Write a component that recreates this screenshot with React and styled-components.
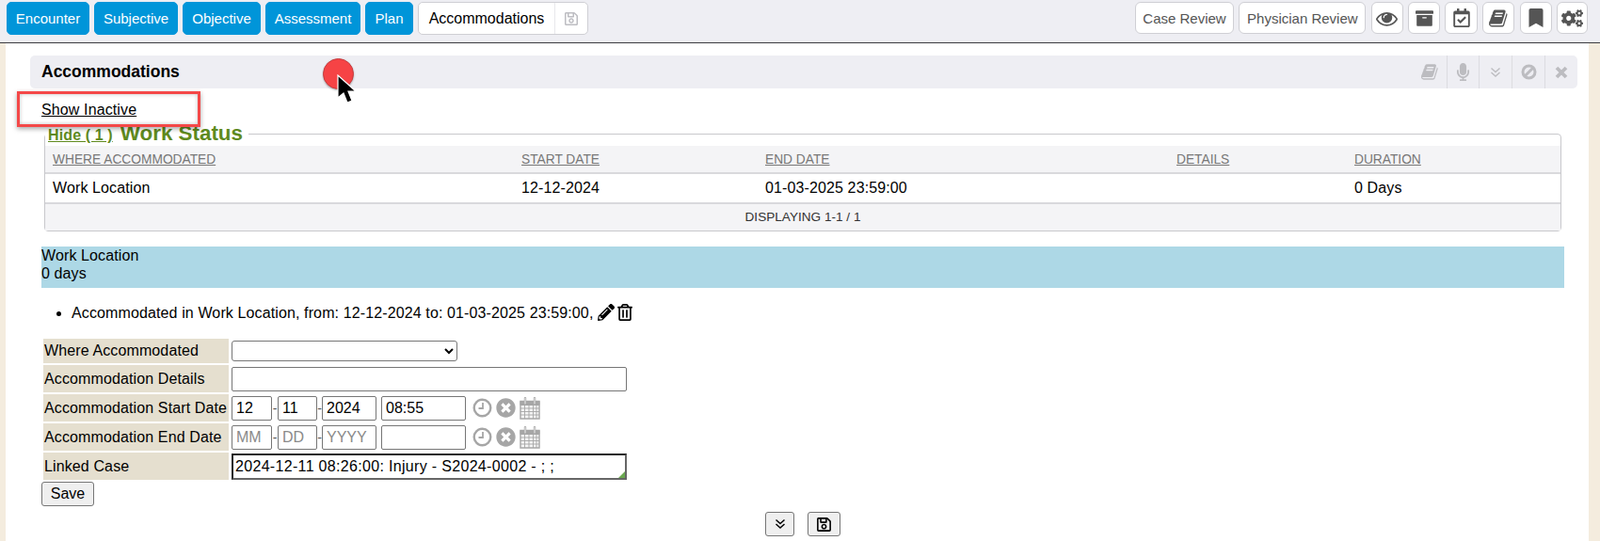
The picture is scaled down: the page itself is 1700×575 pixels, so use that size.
import React from 'react';
import styled, { createGlobalStyle } from 'styled-components';
import {
  FaArchive, FaRegCalendarCheck, FaBookmark, FaCogs, FaMicrophone,
  FaPencilAlt, FaRegTrashAlt, FaTimesCircle, FaRegSave,
} from 'react-icons/fa';

const Global = createGlobalStyle`
  html, body { margin: 0; padding: 0; height: 575px; overflow: hidden; background: #f4ecde; }
  body { font-family: "Liberation Sans", Arial, sans-serif; font-size: 16px; color: #000; }
  * { box-sizing: border-box; }
`;

const Page = styled.div`
  position: relative;
  width: 1700px;
  height: 575px;
  overflow: hidden;
`;

const TopBar = styled.header`
  display: flex;
  justify-content: space-between;
  height: 46px;
  padding: 2px 13px 0 7px;
  background: #eeeef3;
  border-bottom: 1px solid #3c3c40;
`;

const ButtonRow = styled.nav`
  display: flex;
  gap: ${p => p.$gap || 5}px;
`;

const NavButton = styled.button`
  height: 35px;
  padding: 0;
  width: ${p => p.$w}px;
  font: 15px "Liberation Sans", Arial, sans-serif;
  color: #fff;
  background: #0095d9;
  border: 1px solid #0095d9;
  border-radius: 5px;
`;

const ActiveGroup = styled.div`
  display: flex;
  width: 181px;
  height: 35px;
  background: #fff;
  border: 1px solid #cfcfd4;
  border-radius: 5px;
`;

const ActiveLabel = styled.span`
  flex: 1;
  font-size: 16px;
  line-height: 33px;
  text-align: center;
  border-right: 1px solid #e8e8ec;
`;

const ActiveIcon = styled.span`
  width: 34px;
  display: flex;
  align-items: center;
  justify-content: center;
  color: #bdbdc2;
  font-size: 16px;
`;

const ToolButton = styled.button`
  height: 34px;
  width: ${p => p.$w}px;
  padding: 0;
  display: flex;
  align-items: center;
  justify-content: center;
  font: 15px "Liberation Sans", Arial, sans-serif;
  color: #555;
  background: #fff;
  border: 1px solid #cfcfd4;
  border-radius: 6px;
`;

const Content = styled.main`
  margin: 0 12px 0 6px;
  height: 529px;
  background: #fff;
  padding-top: 13px;
  letter-spacing: 0.12px;
`;

const PanelHeader = styled.div`
  display: flex;
  align-items: stretch;
  height: 35px;
  margin: 0 12px 0 26px;
  padding-left: 12px;
  background: #eeeef3;
  border-radius: 5px;
  letter-spacing: 0;
`;

const PanelTitle = styled.h2`
  flex: 1;
  margin: 0;
  font-size: 17.5px;
  line-height: 35px;
  font-weight: bold;
`;

const PanelIcon = styled.span`
  width: ${p => p.$w}px;
  display: flex;
  align-items: center;
  justify-content: center;
  color: #bcbcc0;
  font-size: ${p => p.$size || 17}px;
  border-left: ${p => (p.$plain ? 'none' : '1px solid #dcdce0')};
`;

const InactiveLine = styled.div`
  margin: 13px 0 0 38px;
  height: 20px;
  line-height: 20px;
`;

const PlainLink = styled.a`
  color: #000;
  text-decoration: underline;
`;

const WorkSet = styled.fieldset`
  margin: 3px 29px 0 41px;
  padding: 0;
  min-width: 0;
  border: 1px solid #c8c8cc;
  border-radius: 4px;
`;

const WorkLegend = styled.legend`
  display: flex;
  align-items: baseline;
  height: 25px;
  padding: 0 6px 0 3px;
  margin-left: 0;
  color: #5f8a1e;
  font-weight: bold;
  line-height: 23px;
  white-space: nowrap;
`;

const HideLink = styled.a`
  font-size: 16px;
  text-decoration: underline;
  margin-right: 8px;
`;

const WorkTitle = styled.span`
  font-size: 22.4px;
  letter-spacing: 0;
`;

const GridRow = styled.div`
  display: grid;
  grid-template-columns: 498px 259px 437px 189px 1fr;
  align-items: center;
  padding-left: 8px;
  height: ${p => p.$h}px;
  background: ${p => p.$bg || '#fff'};
  border-bottom: 2px solid #d9d9dc;
`;

const HeadCell = styled.a`
  font-size: 13.75px;
  letter-spacing: 0;
  color: #777;
  text-decoration: underline;
`;

const GridFoot = styled.div`
  height: 28px;
  line-height: 28px;
  font-size: 13.6px;
  letter-spacing: 0;
  color: #333;
  text-align: center;
  background: #f4f4f6;
`;

const Band = styled.div`
  margin: 16px 26px 0 38px;
  height: 44px;
  padding-top: 1px;
  background: #add8e6;
  line-height: 18.5px;
`;

const EntryList = styled.ul`
  margin: 17px 0 0 38px;
  padding: 0 0 0 32px;
  line-height: 20px;
`;

const EntryIcons = styled.span`
  display: inline-flex;
  align-items: center;
  gap: 2px;
  margin-left: 5px;
  vertical-align: -3px;
  font-size: 18px;
`;

const FormGrid = styled.div`
  display: grid;
  grid-template-columns: 197px 1fr;
  grid-template-rows: 26px repeat(4, 29px);
  row-gap: 2px;
  column-gap: 3px;
  margin: 17px 0 0 40px;
`;

const Label = styled.div`
  display: flex;
  align-items: center;
  padding-left: 1px;
  background: #e5dfcf;
  white-space: nowrap;
  font-size: 16px;
`;

const Field = styled.div`
  display: flex;
  align-items: center;
`;

const Select = styled.select`
  width: 240px;
  height: 22px;
  background: #fff;
  border: 1px solid #767676;
  border-radius: 3px;
  font: 16px "Liberation Sans", Arial, sans-serif;
`;

const TextInput = styled.input`
  width: ${p => p.$w}px;
  height: 26px;
  padding: 1px 4px;
  font: 16px "Liberation Sans", Arial, sans-serif;
  color: #000;
  background: #fff;
  border: 1px solid #767676;
  border-radius: 2px;
  &::placeholder { color: #8a8a8a; }
`;

const Dash = styled.span`
  width: ${p => p.$w}px;
  text-align: center;
  color: #555;
  font-size: 14px;
  letter-spacing: 0;
`;

const DateIcons = styled.span`
  display: inline-flex;
  align-items: center;
  gap: 4px;
  margin-left: 7px;
  color: #a6a6a6;
`;

const CaseBox = styled.div`
  position: relative;
  width: 420px;
  height: 28px;
  padding: 0 2px;
  line-height: 23px;
  letter-spacing: 0.32px;
  border-style: solid;
  border-width: 2px;
  border-color: #222 #666 #666 #222;
  background: #fff;
  overflow: hidden;
`;

const CaseCorner = styled.span`
  position: absolute;
  right: 0;
  bottom: 0;
  width: 0;
  height: 0;
  border-style: solid;
  border-width: 0 0 7px 7px;
  border-color: transparent transparent #6aa84f transparent;
`;

const SaveButton = styled.button`
  display: block;
  margin: 2px 0 0 38px;
  width: 56px;
  height: 26px;
  padding: 0;
  font: 16px "Liberation Sans", Arial, sans-serif;
  background: #efefef;
  border: 1px solid #767676;
  border-radius: 3px;
`;

const BottomBar = styled.div`
  display: flex;
  justify-content: center;
  gap: 14px;
  margin: 6px 0 0 0;
  padding-left: 12px;
`;

const BottomButton = styled.button`
  width: ${p => p.$w}px;
  height: 26px;
  padding: 0;
  display: flex;
  align-items: center;
  justify-content: center;
  font-size: ${p => p.$size}px;
  color: #000;
  background: #efefef;
  border: 1px solid #767676;
  border-radius: 3px;
`;

const RedBox = styled.div`
  position: absolute;
  left: 18px;
  top: 97px;
  width: 195px;
  height: 38px;
  border: 3px solid #f44848;
  box-shadow: 0 2px 5px rgba(0, 0, 0, 0.35), inset 0 0 4px rgba(0, 0, 0, 0.25);
`;

const ClickDot = styled.div`
  position: absolute;
  left: 343px;
  top: 62px;
  width: 33px;
  height: 33px;
  border-radius: 50%;
  background: #f64345;
  border: 1px solid #c83a3c;
  box-shadow: 0 1px 2px rgba(0, 0, 0, 0.3);
`;

const CursorArrow = styled.svg`
  position: absolute;
  left: 357px;
  top: 79px;
`;

const BookIcon = ({ size = 18 }) => (
  <svg width={size} height={size} viewBox="0 0 1792 1792" fill="currentColor">
    <path d="M1639 478q40 57 18 129l-275 906q-19 64-76.5 107.5t-122.5 43.5h-923q-77 0-148.5-53.5t-99.5-131.5q-24-67-2-127 0-4 3-27t4-37q1-8-3-21.5t-3-19.5q2-11 8-21t16.5-23.5 16.5-23.5q23-38 45-91.5t30-91.5q3-10 .5-30t-.5-28q3-11 17-28t17-23q21-36 42-92t25-90q1-9-2.5-32t.5-28q4-13 22-30.5t22-22.5q19-26 42.5-84.5t27.5-96.5q1-8-3-25.5t-2-26.5q2-8 9-18t18-23 17-21q8-12 16.5-30.5t15-35 16-36 19.5-32 26.5-23.5 36-11.5 47.5 5.5l-1 3q38-9 51-9h761q74 0 114 56t18 130l-274 906q-36 119-71.5 153.5t-128.5 34.5h-869q-27 0-38 15-11 16-1 43 24 70 144 70h923q29 0 56-15.5t35-41.5l300-987q7-22 5-57 38 15 59 43zm-1064 2q-4 13 2 22.5t20 9.5h608q13 0 25.5-9.5t16.5-22.5l21-64q4-13-2-22.5t-20-9.5h-608q-13 0-25.5 9.5t-16.5 22.5zm-83 256q-4 13 2 22.5t20 9.5h608q13 0 25.5-9.5t16.5-22.5l21-64q4-13-2-22.5t-20-9.5h-608q-13 0-25.5 9.5t-16.5 22.5z" />
  </svg>
);

const EyeIcon = ({ size = 24 }) => (
  <svg width={size} height={size} viewBox="0 0 1792 1792" fill="currentColor">
    <path d="M1664 960q-152-236-381-353 61 104 61 225 0 185-131.500 316.500t-316.500 131.500-316.500-131.500-131.500-316.500q0-121 61-225-229 117-381 353 133 205 333.500 326.500t434.500 121.500 434.500-121.500 333.500-326.500zm-720-384q0-20-14-34t-34-14q-125 0-214.500 89.500t-89.500 214.500q0 20 14 34t34 14 34-14 14-34q0-86 61-147t147-61q20 0 34-14t14-34zm848 384q0 34-20 69-140 230-376.500 368.500t-499.500 138.500-499.500-139-376.500-368q-20-35-20-69t20-69q140-229 376.500-368t499.500-139 499.500 139 376.500 368q20 35 20 69z" />
  </svg>
);

const DoubleChevron = ({ size = 14, weight = 1.6 }) => (
  <svg width={size} height={size} viewBox="0 0 14 14" fill="none" stroke="currentColor" strokeWidth={weight}>
    <path d="M2.500 2.500 7 6.500l4.500-4M2.500 7 7 11l4.500-4" />
  </svg>
);

const BanIcon = () => (
  <svg width="17" height="17" viewBox="0 0 17 17" fill="none" stroke="currentColor" strokeWidth="3">
    <circle cx="8.500" cy="8.500" r="6.500" />
    <path d="M4 13 13 4" />
  </svg>
);

const CrossIcon = () => (
  <svg width="14" height="14" viewBox="0 0 14 14" fill="none" stroke="currentColor" strokeWidth="3.800">
    <path d="M2 2l10 10M12 2 2 12" />
  </svg>
);

const ClockIcon = () => (
  <svg width="21" height="21" viewBox="0 0 21 21" fill="none" stroke="currentColor">
    <circle cx="10.500" cy="10.500" r="8.800" strokeWidth="2.400" />
    <path d="M11 5v6H6.500" strokeWidth="1.800" />
  </svg>
);

const CalendarIcon = () => (
  <svg width="22" height="24" viewBox="0 0 22 24" fill="none" stroke="currentColor">
    <path d="M1 4.500h20v18.500H1z" strokeWidth="1.400" fill="#f4f4f4" />
    <path d="M1 4.500h20v4H1z" fill="currentColor" strokeWidth="1" />
    <path d="M1 12h20M1 15.500h20M1 19h20M5.500 9v14M10 9v14M14.500 9v14M18 9v14" strokeWidth="0.900" />
    <path d="M6 1v6M16 1v6" strokeWidth="2.400" strokeLinecap="round" />
    <path d="M6 1v6M16 1v6" strokeWidth="0.800" stroke="#fff" strokeLinecap="round" />
  </svg>
);

const tabs = [['Encounter', 88], ['Subjective', 89], ['Objective', 83], ['Assessment', 101], ['Plan', 51]];

export default function App() {
  return (
    <Page>
      <Global />
      <TopBar>
        <ButtonRow>
          {tabs.map(([t, w]) => <NavButton key={t} $w={w}>{t}</NavButton>)}
          <ActiveGroup>
            <ActiveLabel>Accommodations</ActiveLabel>
            <ActiveIcon><FaRegSave /></ActiveIcon>
          </ActiveGroup>
        </ButtonRow>
        <ButtonRow $gap={5.35}>
          <ToolButton $w={105}>Case Review</ToolButton>
          <ToolButton $w={135}>Physician Review</ToolButton>
          <ToolButton $w={34}><EyeIcon size={23} /></ToolButton>
          <ToolButton $w={34}><FaArchive size={19} /></ToolButton>
          <ToolButton $w={34.600}><FaRegCalendarCheck size={20} /></ToolButton>
          <ToolButton $w={34}><BookIcon size={21} /></ToolButton>
          <ToolButton $w={34}><FaBookmark size={20} /></ToolButton>
          <ToolButton $w={33}><FaCogs size={23} /></ToolButton>
        </ButtonRow>
      </TopBar>

      <Content>
        <PanelHeader>
          <PanelTitle>Accommodations</PanelTitle>
          <PanelIcon $plain $w={36}><BookIcon size={19} /></PanelIcon>
          <PanelIcon $w={34} $size={19}><FaMicrophone /></PanelIcon>
          <PanelIcon $w={35}><DoubleChevron size={14} weight={1.4} /></PanelIcon>
          <PanelIcon $w={35}><BanIcon /></PanelIcon>
          <PanelIcon $w={35}><CrossIcon /></PanelIcon>
        </PanelHeader>
        <InactiveLine><PlainLink>Show Inactive</PlainLink></InactiveLine>
        <WorkSet>
          <WorkLegend>
            <HideLink>Hide ( 1 )</HideLink>
            <WorkTitle>Work Status</WorkTitle>
          </WorkLegend>
          <GridRow $h={30} $bg="#f4f4f6">
            <HeadCell>WHERE ACCOMMODATED</HeadCell>
            <HeadCell>START DATE</HeadCell>
            <HeadCell>END DATE</HeadCell>
            <HeadCell>DETAILS</HeadCell>
            <HeadCell>DURATION</HeadCell>
          </GridRow>
          <GridRow $h={32}>
            <span>Work Location</span>
            <span>12-12-2024</span>
            <span>01-03-2025 23:59:00</span>
            <span />
            <span>0 Days</span>
          </GridRow>
          <GridFoot>DISPLAYING 1-1 / 1</GridFoot>
        </WorkSet>
        <Band>Work Location<br />0 days</Band>
        <EntryList>
          <li>
            Accommodated in Work Location, from: 12-12-2024 to: 01-03-2025 23:59:00,
            <EntryIcons><FaPencilAlt /><FaRegTrashAlt /></EntryIcons>
          </li>
        </EntryList>
        <FormGrid>
          <Label>Where Accommodated</Label>
          <Field><Select defaultValue=""><option value="" /></Select></Field>
          <Label>Accommodation Details</Label>
          <Field><TextInput $w={420} readOnly /></Field>
          <Label>Accommodation Start Date</Label>
          <Field>
            <TextInput $w={43} defaultValue="12" />
            <Dash $w={6}>-</Dash>
            <TextInput $w={42} defaultValue="11" />
            <Dash $w={5}>-</Dash>
            <TextInput $w={58} defaultValue="2024" />
            <Dash $w={5} />
            <TextInput $w={90} defaultValue="08:55" />
            <DateIcons><ClockIcon /><FaTimesCircle size={21} /><CalendarIcon /></DateIcons>
          </Field>
          <Label>Accommodation End Date</Label>
          <Field>
            <TextInput $w={43} placeholder="MM" />
            <Dash $w={6}>-</Dash>
            <TextInput $w={42} placeholder="DD" />
            <Dash $w={5}>-</Dash>
            <TextInput $w={58} placeholder="YYYY" />
            <Dash $w={5} />
            <TextInput $w={90} />
            <DateIcons><ClockIcon /><FaTimesCircle size={21} /><CalendarIcon /></DateIcons>
          </Field>
          <Label>Linked Case</Label>
          <Field>
            <CaseBox>2024-12-11 08:26:00: Injury - S2024-0002 - ; ;<CaseCorner /></CaseBox>
          </Field>
        </FormGrid>
        <SaveButton>Save</SaveButton>
        <BottomBar>
          <BottomButton $w={31} $size={14}><DoubleChevron size={14} weight={1.5} /></BottomButton>
          <BottomButton $w={35} $size={17}><FaRegSave /></BottomButton>
        </BottomBar>
      </Content>

      <RedBox />
      <ClickDot />
      <CursorArrow width="22" height="32" viewBox="0 0 22 32">
        <path d="M2 1v24l6-5 4 10 5-2-4-10h8z" fill="#000" stroke="#fff" strokeWidth="1.2" />
      </CursorArrow>
    </Page>
  );
}
